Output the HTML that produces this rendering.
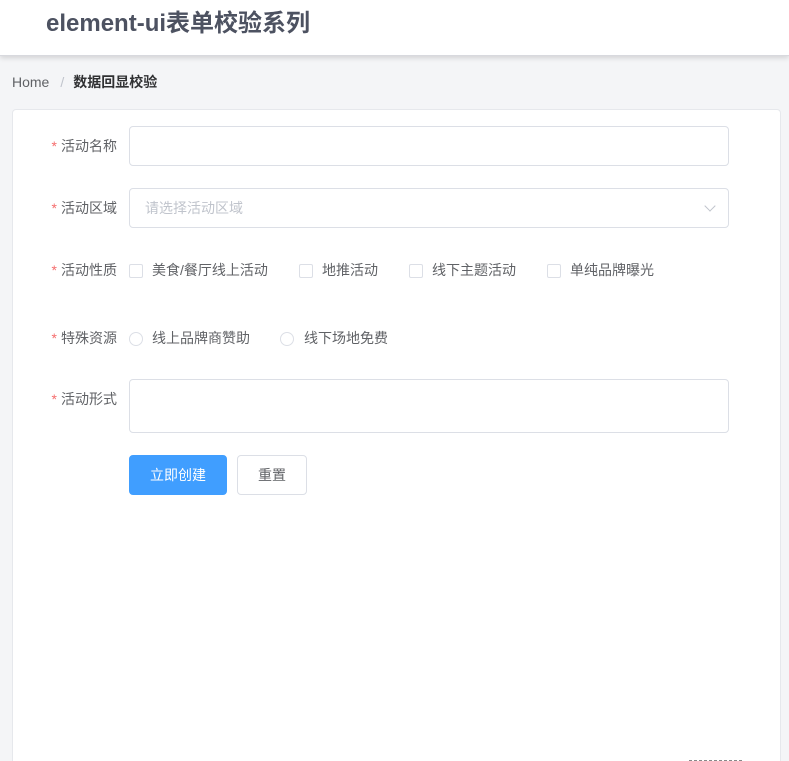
<!DOCTYPE html>
<html><head><meta charset="utf-8"><style>
*{box-sizing:border-box;margin:0;padding:0}
html{width:789px;height:761px;overflow:hidden}
body{width:789px;height:761px;overflow:hidden;background:#f4f5f7;font-family:"Liberation Sans","Noto Sans CJK SC",sans-serif;position:relative}
.hdr{position:absolute;left:0;top:0;width:789px;height:56px;background:#fff;box-shadow:0 2px 5px rgba(0,0,0,.14);border-bottom:1px solid #d8d9de}
.hdr h1{position:absolute;left:46px;top:9px;font-size:24px;font-weight:bold;color:#4d5261;line-height:30px}
.bc{position:absolute;left:12px;top:73px;font-size:14px;color:#606266;line-height:18px}
.bc .sep{color:#c0c4cc;margin:0 9px 0 11px}
.bc b{color:#303133;font-weight:bold;font-size:14px}
.card{position:absolute;left:12px;top:109px;width:769px;height:660px;background:#fff;border:1px solid #e6e8ec;border-radius:4px}
.row{position:absolute;left:0;width:100%}
.lbl{position:absolute;left:0;width:104px;text-align:right;font-size:14px;color:#606266;line-height:20px}
.lbl i{color:#f56c6c;font-style:normal;margin-right:4px}
.inp{position:absolute;left:116px;width:600px;height:40px;border:1px solid #dcdfe6;border-radius:4px;background:#fff}
.ph{position:absolute;left:15px;top:10px;font-size:14px;color:#c0c4cc;line-height:18px}
.arr{position:absolute;right:14px;top:13px;width:8px;height:8px;border-right:1px solid #c0c4cc;border-bottom:1px solid #c0c4cc;transform:rotate(45deg)}
.opt{position:absolute;font-size:14px;color:#606266;line-height:20px}
.cb{position:absolute;width:14px;height:14px;border:1px solid #dcdfe6;border-radius:2px;background:#fff}
.rd{position:absolute;width:14px;height:14px;border:1px solid #dcdfe6;border-radius:50%;background:#fff}
.btn{position:absolute;height:40px;border-radius:4px;font-size:14px;line-height:38px;text-align:center}
</style></head><body>
<div class="hdr"><h1>element-ui表单校验系列</h1></div>
<div class="bc">Home<span class="sep">/</span><b>数据回显校验</b></div>
<div class="card">
  <div class="row" style="top:16px"><div class="lbl" style="top:10px"><i>*</i>活动名称</div><div class="inp" style="top:0"></div></div>
  <div class="row" style="top:78px"><div class="lbl" style="top:10px"><i>*</i>活动区域</div><div class="inp" style="top:0"><span class="ph">请选择活动区域</span><span class="arr"></span></div></div>
  <div class="row" style="top:140px">
    <div class="lbl" style="top:10px"><i>*</i>活动性质</div>
    <span class="cb" style="left:116px;top:14px"></span><span class="opt" style="left:139px;top:10px">美食/餐厅线上活动</span>
    <span class="cb" style="left:286px;top:14px"></span><span class="opt" style="left:309px;top:10px">地推活动</span>
    <span class="cb" style="left:396px;top:14px"></span><span class="opt" style="left:419px;top:10px">线下主题活动</span>
    <span class="cb" style="left:534px;top:14px"></span><span class="opt" style="left:557px;top:10px">单纯品牌曝光</span>
  </div>
  <div class="row" style="top:208px">
    <div class="lbl" style="top:10px"><i>*</i>特殊资源</div>
    <span class="rd" style="left:116px;top:14px"></span><span class="opt" style="left:139px;top:10px">线上品牌商赞助</span>
    <span class="rd" style="left:267px;top:14px"></span><span class="opt" style="left:291px;top:10px">线下场地免费</span>
  </div>
  <div class="row" style="top:269px"><div class="lbl" style="top:10px"><i>*</i>活动形式</div><div class="inp" style="top:0;height:54px"></div></div>
  <div class="btn" style="left:116px;top:345px;width:98px;background:#409eff;color:#fff;border:1px solid #409eff">立即创建</div>
  <div class="btn" style="left:224px;top:345px;width:70px;background:#fff;color:#606266;border:1px solid #dcdfe6">重置</div>
  <div style="position:absolute;left:676px;top:650px;width:53px;border-top:1px dashed #888"></div>
</div>
</body></html>
